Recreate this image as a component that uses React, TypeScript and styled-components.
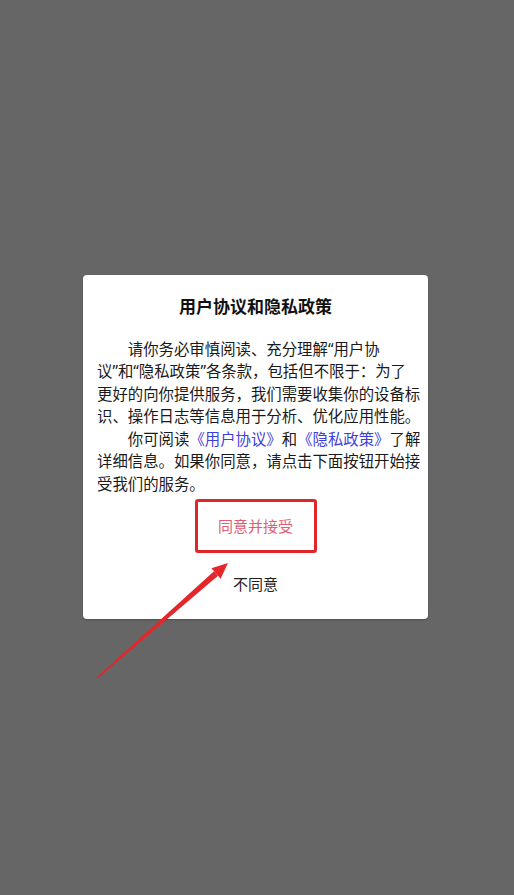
import React from "react";
import styled, { createGlobalStyle } from "styled-components";

const GlobalStyle = createGlobalStyle`
  html, body {
    margin: 0;
    padding: 0;
    background: #666666;
  }
  * {
    box-sizing: border-box;
  }
`;

const Screen = styled.div`
  position: relative;
  width: 100%;
  height: 100vh;
  display: flex;
  align-items: center;
  justify-content: center;
  background: #666666;
  overflow: hidden;
  font-family: "Noto Sans", "Noto Sans CJK SC", sans-serif;
`;

const Dialog = styled.div`
  width: 345px;
  margin: -1px 0 0 -3px;
  display: flex;
  flex-direction: column;
  align-items: center;
  padding: 20px 0 24px;
  background: #ffffff;
  border-radius: 4px;
  box-shadow: 0 1px 2px rgba(0, 0, 0, 0.25);
`;

const Title = styled.div`
  font-size: 17px;
  line-height: 24px;
  font-weight: 700;
  color: #111111;
`;

const Body = styled.div`
  align-self: stretch;
  margin-top: 20px;
  padding: 0 8px 0 14px;
  font-size: 15.4px;
  line-height: 22.4px;
  color: #1a1a1a;
`;

const Line = styled.div<{ $indent?: boolean }>`
  white-space: nowrap;
  padding-left: ${(p) => (p.$indent ? "2em" : "0")};
`;

const Link = styled.span`
  color: #3f3fd8;
`;

const AgreeButton = styled.button`
  margin-top: 3px;
  width: 122px;
  height: 54px;
  border: 3px solid #e0262a;
  border-radius: 3px;
  background: #ffffff;
  color: #e25c72;
  font-family: inherit;
  font-size: 15px;
  padding: 0;
  cursor: pointer;
`;

const RejectButton = styled.button`
  margin-top: 20px;
  border: none;
  background: none;
  padding: 0;
  height: 22px;
  line-height: 22px;
  color: #222222;
  font-family: inherit;
  font-size: 15px;
  cursor: pointer;
`;

const Annotation = styled.svg`
  position: absolute;
  top: 0;
  left: 0;
  width: 514px;
  height: 895px;
  pointer-events: none;
`;

const App: React.FC = () => {
  return (
    <>
      <GlobalStyle />
      <Screen>
        <Dialog>
          <Title>用户协议和隐私政策</Title>
          <Body>
            <Line $indent>请你务必审慎阅读、充分理解“用户协</Line>
            <Line>议”和“隐私政策”各条款，包括但不限于：为了</Line>
            <Line>更好的向你提供服务，我们需要收集你的设备标</Line>
            <Line>识、操作日志等信息用于分析、优化应用性能。</Line>
            <Line $indent>
              你可阅读<Link>《用户协议》</Link>和<Link>《隐私政策》</Link>了解
            </Line>
            <Line>详细信息。如果你同意，请点击下面按钮开始接</Line>
            <Line>受我们的服务。</Line>
          </Body>
          <AgreeButton>同意并接受</AgreeButton>
          <RejectButton>不同意</RejectButton>
        </Dialog>

        {/* red arrow pointing at the accept button */}
        <Annotation viewBox="0 0 514 895">
          <polygon
            points="96.5,677.4 97.5,678.6 218,575.8 214,571.2"
            fill="#e3272b"
          />
          <polygon points="228,563 220.6,578.8 211.4,568.2" fill="#e3272b" />
        </Annotation>
      </Screen>
    </>
  );
};

export default App;
